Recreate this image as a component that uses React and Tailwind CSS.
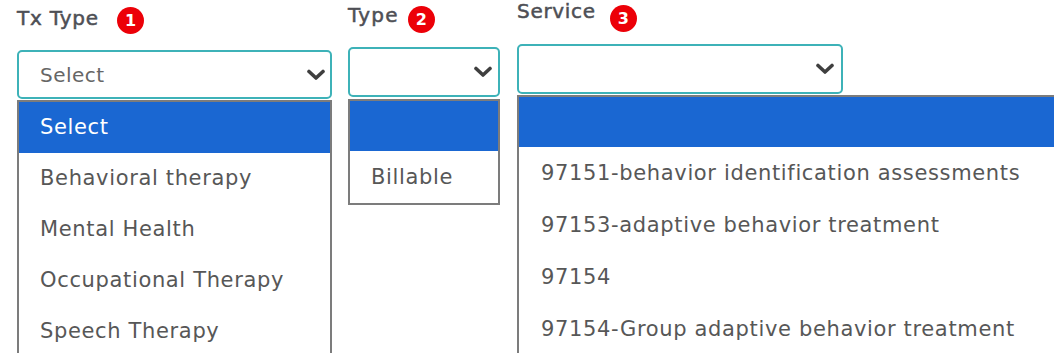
const font = { fontFamily: '"DejaVu Sans", "Liberation Sans", sans-serif' };

const Chevron = () => (
  <svg width="20" height="12" viewBox="0 0 20 12" fill="none" className="shrink-0">
    <polyline points="3,2.5 10,9 17,2.5" stroke="#3f3f3f" strokeWidth="3.6" strokeLinecap="round" strokeLinejoin="round" />
  </svg>
);

const Badge = ({ n, className }) => (
  <div className={`w-[27px] h-[27px] rounded-full bg-[#ec0008] text-white text-[16px] font-bold leading-none flex items-center justify-center shrink-0 ${className}`}>
    {n}
  </div>
);

const Option = ({ children, active, h, pl }) => (
  <div
    className={`${h} ${pl} flex items-center text-[21px] leading-none tracking-[0.65px] whitespace-nowrap ${
      active ? "bg-[#1a67d2] text-white" : "text-[#575757]"
    }`}
  >
    {children}
  </div>
);

const labelCls =
  "text-[20px] leading-[20px] text-[#4e4f55] [-webkit-text-stroke:0.5px_#4e4f55] whitespace-nowrap";

export default function App() {
  return (
    <div style={font} className="w-[1054px] h-[353px] overflow-hidden bg-white flex items-start">
      {/* Tx Type */}
      <div className="ml-[17px] w-[315px] flex flex-col shrink-0">
        <div className="h-[50px] flex items-start">
          <span className={`mt-[8px] tracking-[0.8px] ${labelCls}`}>Tx Type</span>
          <Badge n="1" className="ml-[18px] mt-[7px]" />
        </div>
        <div className="h-[49px] border-2 border-[#3db2b8] rounded-[5px] flex items-center justify-between pl-[21px] pr-[4px]">
          <span className="text-[20px] leading-none tracking-[0.5px] text-[#666]">Select</span>
          <Chevron />
        </div>
        <div className="mt-[1px] border-2 border-[#7c7c7c] h-[260px]">
          <Option active h="h-[51px]" pl="pl-[21px]">Select</Option>
          <Option h="h-[51px]" pl="pl-[21px]">Behavioral therapy</Option>
          <Option h="h-[51px]" pl="pl-[21px]">Mental Health</Option>
          <Option h="h-[51px]" pl="pl-[21px]">Occupational Therapy</Option>
          <Option h="h-[51px]" pl="pl-[21px]">Speech Therapy</Option>
        </div>
      </div>

      {/* Type */}
      <div className="ml-[16px] w-[152px] flex flex-col shrink-0">
        <div className="h-[47px] flex items-start">
          <span className={`mt-[5px] tracking-[1.2px] ${labelCls}`}>Type</span>
          <Badge n="2" className="ml-[9px] mt-[6px]" />
        </div>
        <div className="h-[50px] border-2 border-[#3db2b8] rounded-[5px] flex items-center justify-end pr-[5px]">
          <Chevron />
        </div>
        <div className="mt-[2px] border-2 border-[#7c7c7c]">
          <Option active h="h-[50px]" pl="pl-[21px]">{""}</Option>
          <Option h="h-[52px]" pl="pl-[21px]">Billable</Option>
        </div>
      </div>

      {/* Service */}
      <div className="ml-[17px] w-[600px] flex flex-col shrink-0">
        <div className="h-[44px] flex items-start">
          <span className={`mt-[1px] tracking-[0.7px] ${labelCls}`}>Service</span>
          <Badge n="3" className="ml-[14px] mt-[5px]" />
        </div>
        <div className="w-[326px] h-[50px] border-2 border-[#3db2b8] rounded-[5px] flex items-center justify-end pr-[6px]">
          <Chevron />
        </div>
        <div className="mt-[1px] border-2 border-[#7c7c7c] h-[270px]">
          <Option active h="h-[50px]" pl="pl-[22px]">{""}</Option>
          <Option h="h-[52px]" pl="pl-[22px]">97151-behavior identification assessments</Option>
          <Option h="h-[52px]" pl="pl-[22px]">97153-adaptive behavior treatment</Option>
          <Option h="h-[52px]" pl="pl-[22px]">97154</Option>
          <Option h="h-[52px]" pl="pl-[22px]">97154-Group adaptive behavior treatment</Option>
        </div>
      </div>
    </div>
  );
}
